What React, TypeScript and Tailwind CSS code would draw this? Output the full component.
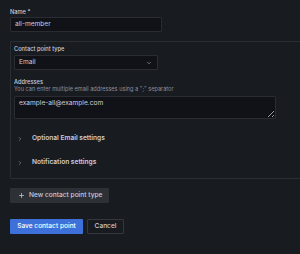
import { ChevronDown, ChevronRight, Plus } from "lucide-react";

function Label({ text }: { text: string }) {
  return (
    <div className="h-[7px] leading-[7px] text-[5.7px] font-medium text-[#ccccdc]">
      {text}
    </div>
  );
}

function CollapseRow({ title }: { title: string }) {
  return (
    <div className="h-[24px] flex items-center pl-[3px]">
      <ChevronRight className="w-[6px] h-[6px] text-[#8e8e9e]" strokeWidth={2.5} />
      <span className="ml-[9px] text-[6.6px] font-semibold text-[#ccccdc]">{title}</span>
    </div>
  );
}

export default function App() {
  return (
    <div className="w-[300px] h-[254px] overflow-hidden bg-[#181b1f] pt-[8px] pl-[10px] font-['Inter',sans-serif]">
      <Label text="Name *" />
      <div className="mt-[2px] w-[152px] h-[15px] rounded-[1px] border border-[#2a2c31] bg-[#111217] flex items-center px-[4px] text-[6.6px] text-[#ccccdc]">
        all-member
      </div>

      <div className="mt-[9px] w-[300px] border border-[#2a2d32] rounded-[1px] px-[3px] pt-[3px] pb-[3px]">
        <Label text="Contact point type" />
        <div className="mt-[3px] w-[144px] h-[15px] rounded-[1px] border border-[#2a2c31] bg-[#111217] flex items-center justify-between pl-[4px] pr-[5px] text-[6.6px] text-[#ccccdc]">
          <span>Email</span>
          <ChevronDown className="w-[6px] h-[6px] text-[#ccccdc]" strokeWidth={2} />
        </div>

        <div className="mt-[8px]">
          <Label text="Addresses" />
        </div>
        <div className="mt-[1px] h-[7px] leading-[7px] text-[5.6px] text-[#8e8e9e]">
          You can enter multiple email addresses using a ";" separator
        </div>
        <textarea
          readOnly
          defaultValue="example-all@example.com"
          className="mt-[3px] block w-[262px] h-[23px] rounded-[1px] border border-[#2a2c31] bg-[#111217] px-[4px] pt-[2px] text-[6.6px] leading-[8px] text-[#ccccdc] outline-none resize"
        />

        <div className="mt-[8px]">
          <CollapseRow title="Optional Email settings" />
          <CollapseRow title="Notification settings" />
        </div>
      </div>

      <button className="mt-[9px] w-[99px] h-[15px] rounded-[1px] bg-[#2d3035] flex items-center pl-[8px] text-[6.6px] font-medium text-[#ccccdc]">
        <Plus className="w-[7px] h-[7px]" strokeWidth={2.5} />
        <span className="ml-[4px]">New contact point type</span>
      </button>

      <div className="mt-[16px] flex gap-[4px]">
        <button className="w-[73px] h-[15px] rounded-[1px] bg-[#3d71d9] text-[6.6px] font-medium text-white">
          Save contact point
        </button>
        <button className="w-[37px] h-[15px] rounded-[1px] border border-[#34373c] text-[6.6px] font-medium text-[#ccccdc]">
          Cancel
        </button>
      </div>
    </div>
  );
}
